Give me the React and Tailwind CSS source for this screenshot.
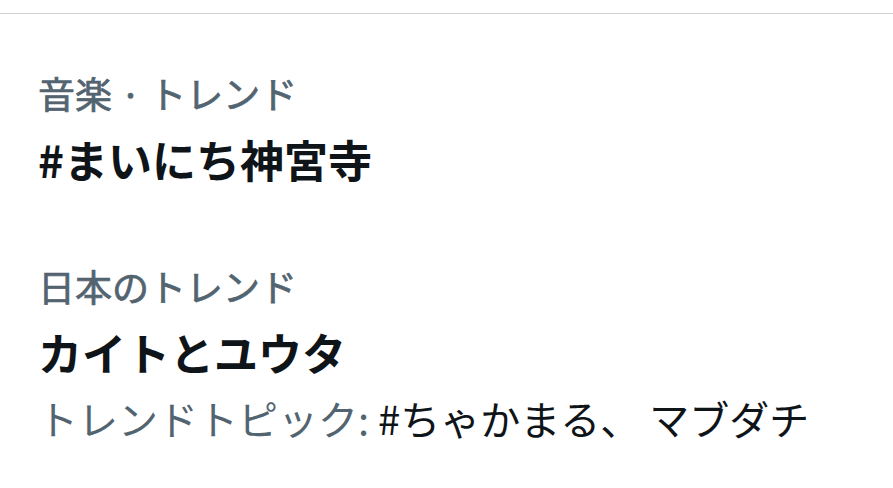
export default function App() {
  const font = { fontFamily: '"Noto Sans CJK JP", "Noto Sans", sans-serif' };
  return (
    <div className="w-[893px] h-[488px] bg-white overflow-hidden" style={font}>
      <div className="h-[13px]" />
      <div className="h-px bg-[#d2d2d2]" />
      <div className="pl-[38px] pt-[57px] flex flex-col">
        <div className="flex flex-col">
          <div className="text-[37px] leading-[44px] font-normal [-webkit-text-stroke:0.7px_#536471] text-[#536471] whitespace-nowrap">音楽 · トレンド</div>
          <div className="text-[44px] leading-[88px] font-bold text-[#0f1419] whitespace-nowrap">#まいにち神宮寺</div>
        </div>
        <div className="flex flex-col mt-[61px]">
          <div className="text-[37px] leading-[44px] font-normal [-webkit-text-stroke:0.7px_#536471] text-[#536471] whitespace-nowrap">日本のトレンド</div>
          <div className="text-[44px] leading-[88px] font-bold text-[#0f1419] whitespace-nowrap">カイトとユウタ</div>
          <div className="text-[40px] leading-[44px] font-normal text-[#0f1419] whitespace-nowrap">
            <span className="text-[#536471]">トレンドトピック: </span>#ちゃかまる、 マブダチ
          </div>
        </div>
      </div>
    </div>
  );
}
